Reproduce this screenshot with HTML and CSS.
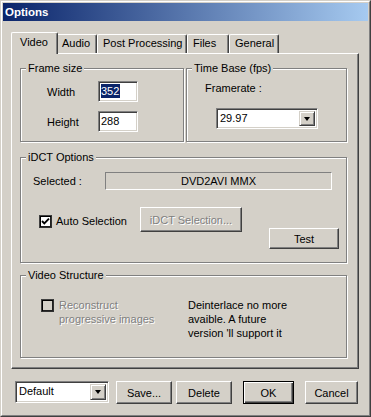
FILE: index.html
```html
<!DOCTYPE html>
<html lang="en">
<head>
  <meta charset="UTF-8">
  <title>Options</title>
  <link rel="stylesheet" href="styles.css">
</head>
<body>

  <div class="window">
    <div class="frame">
      <div class="titlebar">Options</div>

      <div class="content">
        <!-- Tabs -->
        <div class="tabs">
          <div class="tab tab-active tab-video">Video</div>
          <div class="tab tab-audio">Audio</div>
          <div class="tab tab-post">Post Processing</div>
          <div class="tab tab-files">Files</div>
          <div class="tab tab-general">General</div>
        </div>

        <div class="panel">
          <div class="row-top">
            <fieldset class="group group-frame">
              <legend>Frame size</legend>
              <div class="field-row">
                <span class="field-label">Width</span>
                <div class="edit"><span class="sel">352</span></div>
              </div>
              <div class="field-row field-row-2">
                <span class="field-label">Height</span>
                <div class="edit">288</div>
              </div>
            </fieldset>

            <fieldset class="group group-time">
              <legend>Time Base (fps)</legend>
              <div class="framerate-label">Framerate :</div>
              <div class="combo combo-rate">
                <div class="combo-text">29.97</div>
                <div class="combo-btn"><span class="arrow"></span></div>
              </div>
            </fieldset>
          </div>

          <fieldset class="group group-idct">
            <legend>iDCT Options</legend>
            <div class="selected-row">
              <span class="selected-label">Selected :</span>
              <div class="static-field">DVD2AVI MMX</div>
            </div>
            <div class="idct-row">
              <div class="check-group">
                <span class="checkbox">
                  <svg width="9" height="9" viewBox="0 0 9 9"><polyline points="1,4 3.3,6.3 8,1.6" fill="none" stroke="#000" stroke-width="1.9"/></svg>
                </span>
                <span class="check-label">Auto Selection</span>
              </div>
              <button class="btn btn-disabled btn-idct">iDCT Selection...</button>
              <button class="btn btn-test">Test</button>
            </div>
          </fieldset>

          <fieldset class="group group-struct">
            <legend>Video Structure</legend>
            <div class="struct-row">
              <div class="struct-left">
                <span class="checkbox checkbox-disabled"></span>
                <span class="disabled-text">Reconstruct<br>progressive images</span>
              </div>
              <div class="struct-note">Deinterlace no more<br>avaible. A future<br>version 'll support it</div>
            </div>
          </fieldset>
        </div>

        <!-- Bottom buttons -->
        <div class="bottom">
          <div class="combo combo-preset">
            <div class="combo-text">Default</div>
            <div class="combo-btn"><span class="arrow"></span></div>
          </div>
          <button class="btn btn-save">Save...</button>
          <button class="btn btn-delete">Delete</button>
          <button class="btn btn-default btn-ok">OK</button>
          <button class="btn btn-cancel">Cancel</button>
        </div>
      </div>
    </div>
  </div>

</body>
</html>
```

FILE: styles.css
```css
/* Classic grey dialog */
body {
  margin: 0;
  font-family: "Liberation Sans", Arial, sans-serif;
  font-size: 11px;
  color: #000;
  background-color: #d4d0c8;
}

.window {
  width: 371px;
  height: 417px;
  box-sizing: border-box;
  border: 1px solid;
  border-color: #d4d0c8 #404040 #404040 #d4d0c8;
  background-color: #d4d0c8;
}

.frame {
  height: 100%;
  box-sizing: border-box;
  border: 1px solid;
  border-color: #fff #808080 #808080 #fff;
  padding: 1px;
}

.titlebar {
  height: 18px;
  line-height: 18px;
  padding-left: 2px;
  font-size: 11.5px;
  font-weight: bold;
  color: #fff;
  background: linear-gradient(to right, #0a246a, #a6caf0);
}

.content {
  padding: 11px 0 0 8px;
}

/* Tabs */
.tabs {
  display: flex;
  align-items: flex-end;
  height: 21px;
  padding-left: 2px;
}

.tab {
  height: 19px;
  box-sizing: border-box;
  line-height: 17px;
  padding-left: 5px;
  border: 1px solid;
  border-bottom: none;
  border-color: #fff #404040 #fff #fff;
  border-radius: 2px 2px 0 0;
  box-shadow: inset -1px 0 0 #808080;
}

.tab-active {
  position: relative;
  z-index: 1;
  height: 22px;
  margin: 0 -2px -1px -2px;
  padding-left: 8px;
  line-height: 19px;
  background-color: #d4d0c8;
}

.tab-video { width: 47px; }
.tab-audio { width: 41px; }
.tab-post { width: 90px; }
.tab-files { width: 42px; }
.tab-general { width: 50px; }

.panel {
  width: 348px;
  height: 316px;
  box-sizing: border-box;
  border: 1px solid;
  border-color: #fff #404040 #404040 #fff;
  box-shadow: inset -1px -1px 0 #808080;
  padding: 8px 0 0 8px;
}

/* Group boxes */
.group {
  margin: 0;
  padding: 0;
  min-width: 0;
  box-sizing: border-box;
  border: 1px solid #808080;
  box-shadow: inset 1px 1px 0 #fff, 1px 1px 0 #fff;
}

.group legend {
  margin-left: 5px;
  padding: 0 2px;
  line-height: 13px;
  background-color: #d4d0c8;
}

.row-top {
  display: flex;
  gap: 2px;
}

.group-frame { width: 164px; height: 80px; }
.group-time { width: 161px; height: 80px; }
.group-idct { width: 327px; height: 112px; margin-top: 9px; }
.group-struct { width: 327px; height: 89px; margin-top: 6px; }

/* Frame size */
.field-row {
  display: flex;
  align-items: center;
  margin-top: 6px;
  padding-left: 26px;
}

.field-row-2 {
  margin-top: 9px;
}

.field-label {
  width: 51px;
}

.edit {
  width: 40px;
  height: 21px;
  box-sizing: border-box;
  padding: 2px 0 0 2px;
  line-height: 14px;
  background-color: #fff;
  border: 1px solid;
  border-color: #808080 #fff #fff #808080;
  box-shadow: inset 1px 1px 0 #404040, inset -1px -1px 0 #d4d0c8;
}

.sel {
  display: inline-block;
  padding: 0 1px 0 0;
  color: #fff;
  background-color: #0a246a;
}

/* Time base */
.framerate-label {
  margin-top: 7px;
  padding-left: 18px;
  line-height: 13px;
}

.combo {
  display: flex;
  box-sizing: border-box;
  height: 21px;
  padding: 2px;
  background-color: #fff;
  border: 1px solid;
  border-color: #808080 #fff #fff #808080;
  box-shadow: inset 1px 1px 0 #404040, inset -1px -1px 0 #d4d0c8;
}

.combo-rate {
  width: 102px;
  margin: 13px 0 0 29px;
}

.combo-text {
  flex: 1;
  line-height: 15px;
  padding-left: 1px;
}

.combo-btn {
  width: 16px;
  box-sizing: border-box;
  display: flex;
  align-items: center;
  justify-content: center;
  background-color: #d4d0c8;
  border: 1px solid;
  border-color: #d4d0c8 #404040 #404040 #d4d0c8;
  box-shadow: inset 1px 1px 0 #fff, inset -1px -1px 0 #808080;
}

.arrow {
  width: 0;
  height: 0;
  border-left: 3.5px solid transparent;
  border-right: 3.5px solid transparent;
  border-top: 4px solid #000;
}

/* iDCT */
.selected-row {
  display: flex;
  align-items: center;
  margin-top: 8px;
  padding-left: 12px;
}

.selected-label {
  width: 72px;
}

.static-field {
  width: 227px;
  height: 18px;
  box-sizing: border-box;
  line-height: 16px;
  text-align: center;
  border: 1px solid;
  border-color: #808080 #fff #fff #808080;
}

.idct-row {
  display: flex;
  align-items: flex-start;
  margin-top: 17px;
  padding-left: 18px;
}

.check-group {
  display: flex;
  align-items: center;
  width: 101px;
  margin-top: 8px;
  line-height: 13px;
}

.checkbox {
  display: flex;
  align-items: center;
  justify-content: center;
  width: 13px;
  height: 13px;
  box-sizing: border-box;
  background-color: #fff;
  border: 1px solid;
  border-color: #404040 #303030 #303030 #404040;
  box-shadow: inset 1px 1px 0 #000, inset -1px -1px 0 #202020;
}

.checkbox-disabled {
  flex: none;
  margin-top: 1px;
  background-color: #d4d0c8;
}

.check-label {
  margin-left: 4px;
}

/* Buttons */
.btn {
  margin: 0;
  padding: 0;
  font: inherit;
  color: #000;
  background-color: #d4d0c8;
  border: 1px solid;
  border-color: #fff #404040 #404040 #fff;
  box-shadow: inset -1px -1px 0 #808080;
  box-sizing: border-box;
}

.btn-disabled {
  color: #808080;
  text-shadow: 1px 1px 0 #fff;
}

.btn-default {
  border-color: #000;
  box-shadow: inset 1px 1px 0 #fff, inset -1px -1px 0 #404040, inset -2px -2px 0 #808080;
}

.btn-idct {
  width: 102px;
  height: 25px;
}

.btn-test {
  width: 70px;
  height: 21px;
  margin: 21px 7px 0 auto;
}

/* Video structure */
.struct-row {
  display: flex;
  margin-top: 16px;
  padding-left: 20px;
  line-height: 14px;
}

.struct-left {
  display: flex;
  align-items: flex-start;
  width: 147px;
}

.disabled-text {
  margin-left: 5px;
  color: #808080;
  text-shadow: 1px 1px 0 #fff;
}

/* Bottom row */
.bottom {
  display: flex;
  align-items: flex-start;
  margin-top: 12px;
  padding-left: 4px;
}

.combo-preset {
  width: 94px;
  height: 22px;
}

.btn-save, .btn-delete, .btn-ok, .btn-cancel {
  height: 23px;
}

.btn-save { width: 56px; margin-left: 7px; }
.btn-delete { width: 56px; margin-left: 4px; }
.btn-ok { width: 51px; margin-left: 11px; }
.btn-cancel { width: 53px; margin-left: 11px; }
```
